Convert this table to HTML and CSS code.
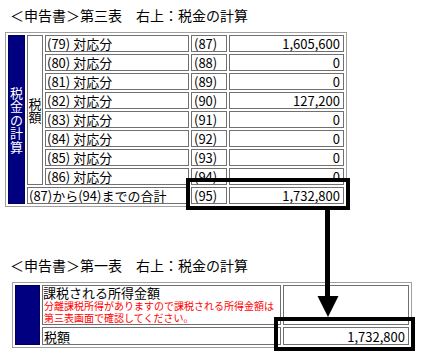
FILE: index.html
```html
<!DOCTYPE html>
<html lang="ja">
<head>
<meta charset="utf-8">
<title>税金の計算</title>
<link rel="stylesheet" href="styles.css">
</head>
<body>
<div class="page">
  <h2 class="title">＜申告書＞第三表　右上：税金の計算</h2>
  <table class="sheet t3">
    <tr>
      <td class="navy w-navy3" rowspan="9"><span class="vtext">税金の計算</span></td>
      <td class="sub w-sub" rowspan="8"><span class="vtext">税額</span></td>
      <td class="lbl w-lbl">(79) 対応分</td><td class="code w-code">(87)</td><td class="val w-val">1,605,600</td>
    </tr>
    <tr><td class="lbl">(80) 対応分</td><td class="code">(88)</td><td class="val">0</td></tr>
    <tr><td class="lbl">(81) 対応分</td><td class="code">(89)</td><td class="val">0</td></tr>
    <tr><td class="lbl">(82) 対応分</td><td class="code">(90)</td><td class="val">127,200</td></tr>
    <tr class="short"><td class="lbl">(83) 対応分</td><td class="code">(91)</td><td class="val">0</td></tr>
    <tr><td class="lbl">(84) 対応分</td><td class="code">(92)</td><td class="val">0</td></tr>
    <tr><td class="lbl">(85) 対応分</td><td class="code">(93)</td><td class="val">0</td></tr>
    <tr><td class="lbl">(86) 対応分</td><td class="code">(94)</td><td class="val">0</td></tr>
    <tr><td class="lbl total" colspan="2">(87)から(94)までの合計</td><td class="code">(95)</td><td class="val">1,732,800</td></tr>
  </table>

  <h2 class="title title2">＜申告書＞第一表　右上：税金の計算</h2>
  <table class="sheet t1">
    <tr class="tall">
      <td class="navy w-navy1" rowspan="2"></td>
      <td class="lbl top w-lbl1"><div class="head">課税される所得金額</div><div class="note">分離課税所得がありますので課税される所得金額は</div><div class="note">第三表画面で確認してください。</div></td>
      <td class="val w-val1"></td>
    </tr>
    <tr class="row2"><td class="lbl">税額</td><td class="val">1,732,800</td></tr>
  </table>

  <div class="box box1"></div>
  <div class="box box2"></div>
  <svg class="arrow" width="424" height="359" viewBox="0 0 424 359">
    <rect x="325" y="208" width="5" height="90" fill="#000"/>
    <polygon points="317.5,296 338.5,296 328,317" fill="#000"/>
  </svg>
</div>
</body>
</html>
```

FILE: styles.css
```css
* { box-sizing: border-box; }
html, body { margin: 0; padding: 0; background: #fff; }
body {
  font-family: "Noto Sans CJK JP", "Noto Sans", sans-serif;
  color: #000;
}
.page {
  position: relative;
  width: 424px;
  height: 359px;
  overflow: hidden;
  padding-top: 5px;
}
.title {
  margin: 0 0 0 10px;
  font-size: 14px;
  font-weight: normal;
  line-height: 20px;
  height: 20px;
  white-space: nowrap;
}
.title2 { margin-top: 48px; }

.sheet {
  border-collapse: separate;
  border-spacing: 2px;
  border: 1px solid #a0a0a0;
  table-layout: fixed;
}
.t3 { width: 342px; margin: 7px 0 0 5px; }
.t1 { width: 400px; margin: 7px 0 0 12px; }

.sheet td {
  border: 1px solid #707070;
  padding: 0 1px;
  font-size: 13px;
  line-height: 15px;
  height: 17px;
  white-space: nowrap;
  background: #fff;
  vertical-align: middle;
}
.sheet tr.short td { height: 16px; }

.w-navy3 { width: 17px; }
.w-sub { width: 16px; }
.w-lbl { width: 144px; }
.w-code { width: 36px; }
.w-val { width: 115px; }
.w-navy1 { width: 25px; }
.w-lbl1 { width: 239px; }
.w-val1 { width: 126px; }

.sheet td.navy {
  background: #000080;
  border-color: #00005a;
  color: #fff;
  padding: 0;
  text-align: center;
}
.sheet td.sub { padding: 0; text-align: center; }
.vtext {
  display: block;
  width: 14px;
  margin: 0 auto;
  font-size: 13px;
  line-height: 13.5px;
  word-break: break-all;
  white-space: normal;
}
.sheet td.code { padding-left: 2px; }
.sheet td.val { text-align: right; padding-right: 3px; }

.sheet tr.tall td { height: 40px; }
.sheet tr.row2 td { height: 18px; }
.sheet td.top { vertical-align: top; padding: 0; }
.head { line-height: 14px; font-size: 13px; height: 14px; }
.note {
  color: #ff0000;
  font-size: 10px;
  line-height: 12px;
  height: 12px;
  padding-left: 1px;
}

.box {
  position: absolute;
  border: 4px solid #000;
}
.box1 { left: 186px; top: 178px; width: 164px; height: 32px; }
.box2 { left: 274px; top: 317px; width: 141px; height: 34px; }
.arrow {
  position: absolute;
  left: 0;
  top: 0;
}
```
